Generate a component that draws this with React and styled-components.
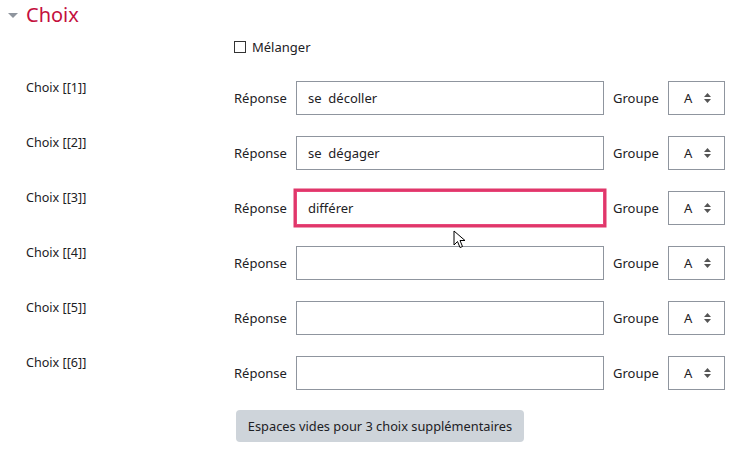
import React from "react";
import styled, { createGlobalStyle } from "styled-components";

const GlobalStyle = createGlobalStyle`
  body {
    margin: 0;
    background: #fff;
    font-family: "Noto Sans", "Open Sans", sans-serif;
    color: #1d2125;
  }
`;

const Page = styled.div`
  position: relative;
  width: 738px;
  height: 452px;
  overflow: hidden;
`;

const Header = styled.div`
  display: flex;
  align-items: center;
  height: 31px;
  padding-left: 8px;
  gap: 8px;
`;

const Caret = styled.span`
  width: 0;
  height: 0;
  border-left: 5px solid transparent;
  border-right: 5px solid transparent;
  border-top: 5px solid #8f959e;
  margin-top: -1px;
`;

const Title = styled.h3`
  margin: 0;
  font-size: 20px;
  font-weight: 400;
  color: #c4103e;
  margin-top: -2px;
`;

const CheckRow = styled.label`
  display: flex;
  align-items: center;
  gap: 6px;
  margin: 9px 0 0 234px;
  height: 13px;
  font-size: 13px;
`;

const Box = styled.span`
  width: 10px;
  height: 10px;
  border: 1px solid #333;
  background: #fff;
`;

const Form = styled.div`
  margin-top: 28px;
  padding-left: 26px;
  display: flex;
  flex-direction: column;
  gap: 21px;
`;

const Row = styled.div`
  display: grid;
  grid-template-columns: 208px 1fr;
  height: 34px;
`;

const Label = styled.div`
  font-size: 12.6px;
  line-height: 14px;
`;

const Controls = styled.div`
  display: flex;
  align-items: center;
  font-size: 13px;
`;

const Caption = styled.span`
  width: ${(p) => p.$w}px;
  padding-left: ${(p) => p.$pad || 0}px;
`;

const Input = styled.div`
  box-sizing: border-box;
  width: 308px;
  height: 34px;
  border: 1px solid ${(p) => (p.$focus ? "#e8467a" : "#8f959e")};
  box-shadow: ${(p) => (p.$focus ? "0 0 0 2.5px #e0376a" : "none")};
  padding: 0 11px;
  display: flex;
  align-items: center;
  white-space: pre;
  font-size: 13px;
  color: #1d2125;
`;

const Select = styled.div`
  box-sizing: border-box;
  width: 57px;
  height: 34px;
  border: 1px solid #8f959e;
  display: flex;
  align-items: center;
  justify-content: space-between;
  padding: 0 13px 0 15px;
  font-size: 13px;
`;

const Arrows = styled.svg`
  width: 7px;
  height: 10px;
`;

const Footer = styled.div`
  padding-left: 236px;
  margin-top: 20px;
`;

const Button = styled.button`
  width: 288px;
  height: 32px;
  border: none;
  border-radius: 4px;
  background: #ced4da;
  color: #1d2125;
  font-family: inherit;
  font-size: 12.8px;
  padding: 0;
`;

const Cursor = styled.svg`
  position: absolute;
  left: 453px;
  top: 230px;
  width: 14px;
  height: 20px;
`;

const choix = ["se  décoller", "se  dégager", "différer", "", "", ""];

export default function App() {
  return (
    <Page>
      <GlobalStyle />
      <Header>
        <Caret />
        <Title>Choix</Title>
      </Header>
      <CheckRow>
        <Box />
        Mélanger
      </CheckRow>
      <Form>
        {choix.map((v, i) => (
          <Row key={i}>
            <Label>Choix [[{i + 1}]]</Label>
            <Controls>
              <Caption $w={62}>Réponse</Caption>
              <Input $focus={i === 2}>{v}</Input>
              <Caption $w={55} $pad={9}>Groupe</Caption>
              <Select>
                A
                <Arrows viewBox="0 0 7 10">
                  <path d="M3.5 0 L7 4 H0 Z M3.5 10 L7 6 H0 Z" fill="#555" />
                </Arrows>
              </Select>
            </Controls>
          </Row>
        ))}
      </Form>
      <Footer>
        <Button>Espaces vides pour 3 choix supplémentaires</Button>
      </Footer>
      <Cursor viewBox="0 0 14 20">
        <path
          d="M1 1 L1 15 L4.5 11.5 L7 17.5 L9.5 16.5 L7 10.5 L12 10.5 Z"
          fill="#fff"
          stroke="#000"
          strokeWidth="1"
          strokeLinejoin="round"
        />
      </Cursor>
    </Page>
  );
}
